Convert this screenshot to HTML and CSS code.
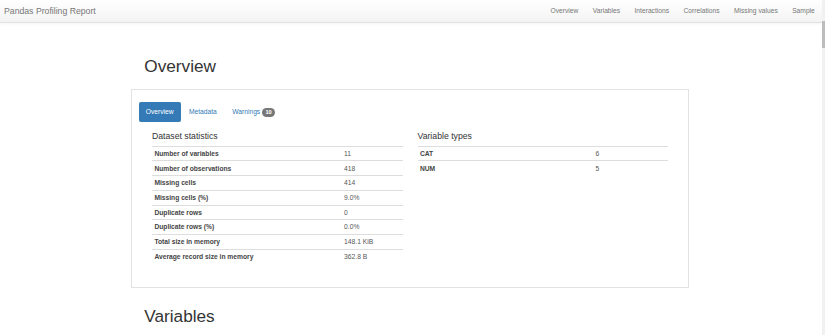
FILE: index.html
```html
<!DOCTYPE html>
<html lang="en">
<head>
    <meta charset="UTF-8">
    <meta name="viewport" content="width=device-width, initial-scale=1.0">
    <title>Pandas Profiling Report</title>
    <link rel="stylesheet" href="styles.css">
</head>
<body>
    <div class="page">
        <!-- Top navigation -->
        <nav class="navbar">
            <a class="brand" href="#">Pandas Profiling Report</a>
            <ul class="nav-links">
                <li><a href="#overview">Overview</a></li>
                <li><a href="#variables">Variables</a></li>
                <li><a href="#interactions">Interactions</a></li>
                <li><a href="#correlations">Correlations</a></li>
                <li><a href="#missing">Missing values</a></li>
                <li><a href="#sample">Sample</a></li>
            </ul>
        </nav>

        <div class="container">
            <!-- Overview -->
            <section class="section" id="overview">
                <h1 class="section-title">Overview</h1>
                <div class="box">
                    <ul class="pills">
                        <li class="active"><a href="#">Overview</a></li>
                        <li><a href="#">Metadata</a></li>
                        <li><a href="#">Warnings <span class="badge">10</span></a></li>
                    </ul>
                    <div class="tab-content">
                        <div class="col">
                            <h4>Dataset statistics</h4>
                            <table class="stats stats-dataset">
                                <tr><th>Number of variables</th><td>11</td></tr>
                                <tr><th>Number of observations</th><td>418</td></tr>
                                <tr><th>Missing cells</th><td>414</td></tr>
                                <tr><th>Missing cells (%)</th><td>9.0%</td></tr>
                                <tr><th>Duplicate rows</th><td>0</td></tr>
                                <tr><th>Duplicate rows (%)</th><td>0.0%</td></tr>
                                <tr><th>Total size in memory</th><td>148.1 KiB</td></tr>
                                <tr><th>Average record size in memory</th><td>362.8 B</td></tr>
                            </table>
                        </div>
                        <div class="col">
                            <h4>Variable types</h4>
                            <table class="stats stats-types">
                                <tr><th>CAT</th><td>6</td></tr>
                                <tr><th>NUM</th><td>5</td></tr>
                            </table>
                        </div>
                    </div>
                </div>
            </section>

            <!-- Variables -->
            <section class="section" id="variables">
                <h1 class="section-title">Variables</h1>
            </section>
        </div>
    </div>

    <div class="scrollbar"><div class="scrollbar-thumb"></div></div>
</body>
</html>
```

FILE: styles.css
```css
html, body {
    height: 100%;
}
body {
    margin: 0;
    display: flex;
    overflow: hidden;
    font-family: "Liberation Sans", Arial, sans-serif;
    font-size: 6.7px;
    color: #333;
    background: #fff;
}
a {
    text-decoration: none;
}
ul {
    list-style: none;
    margin: 0;
    padding: 0;
}
.page {
    flex: 1;
    min-width: 0;
}

/* navbar */
.navbar {
    height: 23px;
    box-sizing: border-box;
    display: flex;
    align-items: center;
    justify-content: space-between;
    padding: 0 0 1px 4px;
    background: linear-gradient(to bottom, #fff 0, #f3f3f3 100%);
    border-bottom: 1px solid #e2e2e2;
    box-shadow: 0 1px 3px rgba(0, 0, 0, 0.05);
}
.brand {
    font-size: 8.7px;
    color: #777;
}
.nav-links {
    display: flex;
}
.nav-links a {
    display: block;
    padding: 0 7.2px;
    color: #777;
    font-size: 6.7px;
}

/* content */
.container {
    width: 560px;
    box-sizing: border-box;
    padding-right: 2px;
    margin: 0 auto;
}
.section-title {
    font-size: 17.2px;
    line-height: 18.9px;
    font-weight: normal;
    margin: 33.9px 0 13.2px;
    padding-left: 13.3px;
    color: #333;
}
#variables .section-title {
    margin-top: 19px;
}
.box {
    border: 1px solid #e2e2e2;
    padding: 12.3px 6.5px 14px;
    background: #fff;
}

/* tabs */
.pills {
    display: flex;
}
.pills li {
    margin-right: 1px;
}
.pills a {
    display: block;
    padding: 4.95px 7.2px;
    line-height: 9.5px;
    color: #337ab7;
    border-radius: 2px;
}
.pills .active a {
    background-color: #337ab7;
    color: #fff;
}
.badge {
    display: inline-block;
    padding: 1.4px 3.4px;
    font-size: 5.7px;
    font-weight: bold;
    line-height: 1;
    color: #fff;
    background-color: #777;
    border-radius: 4.8px;
    vertical-align: 0.5px;
}

.tab-content {
    display: grid;
    grid-template-columns: 1fr 1fr;
    column-gap: 15px;
    padding: 0 13.5px;
}
.col h4 {
    font-size: 8.7px;
    line-height: 9.46px;
    font-weight: normal;
    margin: 9.9px 0 4.7px;
    color: #333;
}
.stats {
    width: 100%;
    border-spacing: 0;
    margin-bottom: 9.5px;
}
.stats th, .stats td {
    padding: 2.1px 2.4px;
    line-height: 9.5px;
    border-top: 1px solid #ddd;
    text-align: left;
    vertical-align: top;
}
.stats th {
    font-weight: bold;
    color: #444;
}
.stats td {
    color: #555;
}
.stats-dataset td {
    width: 56px;
}
.stats-types td {
    width: 70px;
}

/* fake scrollbar */
.scrollbar {
    width: 3px;
    background: #f1f1f1;
}
.scrollbar-thumb {
    margin-top: 21px;
    height: 27px;
    background: #bdbdbd;
}
```
